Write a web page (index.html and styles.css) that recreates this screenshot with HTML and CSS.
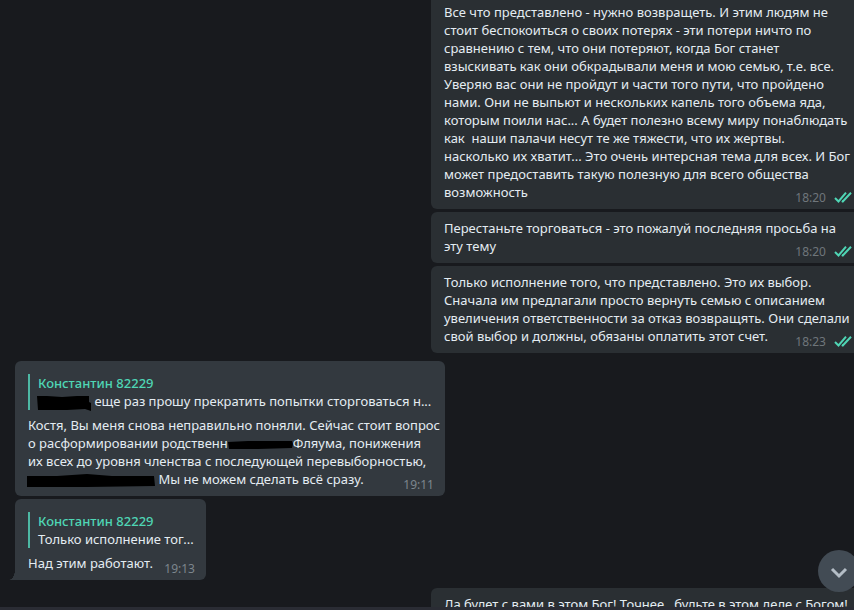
FILE: index.html
```html
<!DOCTYPE html>
<html lang="ru">
<head>
<meta charset="utf-8">
<title>Чат</title>
<link rel="stylesheet" href="styles.css">
</head>
<body>
<svg class="defs" aria-hidden="true">
  <symbol id="read" viewBox="0 0 18 12">
    <path d="M1 6 L4.5 9.5 L12 0.7 M7.8 9 L8.8 9.5 L17 0.7"/>
  </symbol>
</svg>
<div class="app">
  <main class="chat">
    <article class="message out first">
      <p>Все что представлено - нужно возвращеть. И этим людям не<br>стоит беспокоиться о своих потерях - эти потери ничто по<br>сравнению с тем, что они потеряют, когда Бог станет<br>взыскивать как они обкрадывали меня и мою семью, т.е. все.<br>Уверяю вас они не пройдут и части того пути, что пройдено<br>нами. Они не выпьют и нескольких капель того объема яда,<br>которым поили нас... А будет полезно всему миру понаблюдать<br>как&nbsp; наши палачи несут те же тяжести, что их жертвы.<br>насколько их хватит... Это очень интерсная тема для всех. И Бог<br>может предоставить такую полезную для всего общества<br>возможность</p>
      <footer class="meta"><time>18:20</time><svg class="read"><use href="#read"/></svg></footer>
    </article>
    <article class="message out">
      <p>Перестаньте торговаться - это пожалуй последняя просьба на<br>эту тему</p>
      <footer class="meta"><time>18:20</time><svg class="read"><use href="#read"/></svg></footer>
    </article>
    <article class="message out">
      <p>Только исполнение того, что представлено. Это их выбор.<br>Сначала им предлагали просто вернуть семью с описанием<br>увеличения ответственности за отказ возвращять. Они сделали<br>свой выбор и должны, обязаны оплатить этот счет.</p>
      <footer class="meta"><time>18:23</time><svg class="read"><use href="#read"/></svg></footer>
    </article>
    <article class="message in turn wide">
      <blockquote class="reply">
        <strong>Константин 82229</strong>
        <p><svg class="mark mark-name" viewBox="0 0 54 16"><path d="M0 1 L10 1 L25 2 L40 1 L52 1 L52 7 L54 8 L54 16 L48 14 L30 15 L1 15 Z"/></svg> еще раз прошу прекратить попытки сторговаться н...</p>
      </blockquote>
      <p>Костя, Вы меня снова неправильно поняли. Сейчас стоит вопрос<br>о расформировании родственн<svg class="mark mark-word" viewBox="0 0 65 8"><path d="M0 1 L20 0 L64 0 L65 3 L64 7 L30 8 L1 8 Z"/></svg>Фляума, понижения<br>их всех до уровня членства с последующей перевыборностью,<br><svg class="mark mark-phrase" viewBox="0 0 128 14"><path d="M0 2 L30 2 L60 0 L85 2 L127 2 L128 12 L60 13 L0 13 Z"/></svg> Мы не можем сделать всё сразу.</p>
      <footer class="meta"><time>19:11</time></footer>
    </article>
    <article class="message in tail narrow">
      <blockquote class="reply">
        <strong>Константин 82229</strong>
        <p>Только исполнение тог...</p>
      </blockquote>
      <p>Над этим работают.</p>
      <footer class="meta"><time>19:13</time></footer>
    </article>
    <article class="message out turn">
      <p>Да будет с вами в этом Бог! Точнее,&nbsp; будьте в этом деле с Богом!</p>
    </article>
    <button class="scroll" type="button" aria-label="Вниз"><svg viewBox="0 0 18 12"><path d="M2 2 L9 9 L16 2"/></svg></button>
  </main>
  <div class="composer"></div>
</div>
</body>
</html>
```
FILE: styles.css
```css
* {
  box-sizing: border-box;
}

body {
  margin: 0;
  background: #181a1e;
  color: #e4ecf2;
  font: 13px/18px "Noto Sans", "Open Sans", sans-serif;
}

p,
blockquote {
  margin: 0;
}

.defs {
  position: absolute;
  width: 0;
  height: 0;
}

.app {
  display: flex;
  flex-direction: column;
  height: 100vh;
}

.chat {
  position: relative;
  display: flex;
  flex: 1;
  flex-direction: column;
  gap: 3px;
  min-height: 0;
  padding-left: 15px;
  overflow: hidden;
}

.composer {
  flex: none;
  height: 3px;
  background: #2a2c34;
}

.message {
  position: relative;
  flex: none;
  padding: 7px 0 8px 13px;
  border-radius: 6px;
  white-space: nowrap;
}

.out {
  align-self: flex-end;
  width: 423px;
  background: #2a2f33;
  border-radius: 6px 0 0 6px;
}

.first {
  padding-top: 3px;
  border-top-left-radius: 0;
}

.in {
  align-self: flex-start;
  padding-top: 13px;
  background: #33393f;
}

.wide {
  width: 430px;
}

.narrow {
  width: 191px;
}

.turn {
  margin-top: 5px;
}

.tail {
  border-bottom-left-radius: 0;
}

.tail::before {
  position: absolute;
  bottom: 0;
  left: -6px;
  width: 6px;
  height: 10px;
  background: radial-gradient(ellipse 6px 10px at 0 0, transparent 95%, #33393f);
  content: "";
}

.reply {
  margin-bottom: 6px;
  padding-left: 8px;
  border-left: 2px solid #4db8a4;
}

.reply strong {
  display: block;
  color: #4fd6b5;
  font-weight: 500;
}

.meta {
  position: absolute;
  right: 11px;
  bottom: 2px;
  display: flex;
  align-items: center;
  gap: 8px;
  color: #7d868d;
  font-size: 12px;
}

.out .meta {
  right: 2px;
  color: #6f767b;
}

.read {
  width: 18px;
  height: 12px;
  fill: none;
  stroke: #4fd6b5;
  stroke-width: 2;
}

.mark {
  margin: -2px 0;
  vertical-align: middle;
  fill: #000;
}

.mark-name {
  width: 54px;
  height: 16px;
  margin-left: -1px;
}

.mark-word {
  width: 65px;
  height: 8px;
}

.mark-phrase {
  width: 128px;
  height: 14px;
  margin-left: -1px;
}

.scroll {
  position: absolute;
  right: -6px;
  bottom: 15px;
  display: grid;
  place-items: center;
  width: 42px;
  height: 42px;
  padding: 4px 0 0;
  border: 0;
  border-radius: 50%;
  background: #424b54;
}

.scroll svg {
  width: 18px;
  height: 12px;
  fill: none;
  stroke: #b4bdc6;
  stroke-width: 3;
}
```
